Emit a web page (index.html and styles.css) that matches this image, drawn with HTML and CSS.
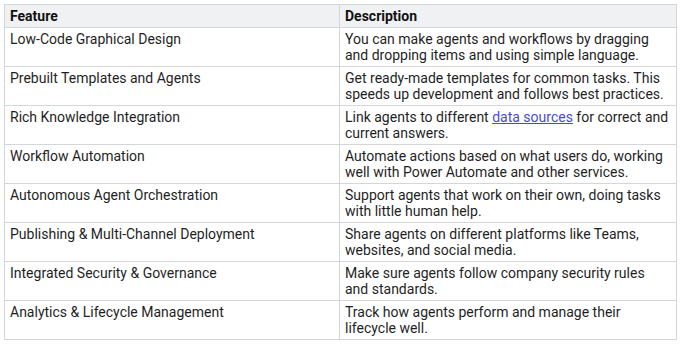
FILE: index.html
```html
<!DOCTYPE html>
<html>
<head>
<meta charset="utf-8">
<link rel="stylesheet" href="styles.css">
</head>
<body>
<table class="features">
  <thead>
    <tr><th class="col-feature">Feature</th><th class="col-desc">Description</th></tr>
  </thead>
  <tbody>
    <tr><td>Low-Code Graphical Design</td><td>You can make agents and workflows by dragging and dropping items and using simple language.</td></tr>
    <tr><td>Prebuilt Templates and Agents</td><td>Get ready-made templates for common tasks. This speeds up development and follows best practices.</td></tr>
    <tr><td>Rich Knowledge Integration</td><td>Link agents to different <a class="link" href="#">data sources</a> for correct and current answers.</td></tr>
    <tr><td>Workflow Automation</td><td>Automate actions based on what users do, working well with Power Automate and other services.</td></tr>
    <tr><td>Autonomous Agent Orchestration</td><td>Support agents that work on their own, doing tasks with little human help.</td></tr>
    <tr><td>Publishing &amp; Multi-Channel Deployment</td><td>Share agents on different platforms like Teams, websites, and social media.</td></tr>
    <tr><td>Integrated Security &amp; Governance</td><td>Make sure agents follow company security rules and standards.</td></tr>
    <tr><td>Analytics &amp; Lifecycle Management</td><td>Track how agents perform and manage their lifecycle well.</td></tr>
  </tbody>
</table>
</body>
</html>
```
FILE: styles.css
```css
html, body {
  margin: 0;
  padding: 0;
  background: #ffffff;
}
body {
  padding: 4px;
  font-family: Roboto, "Liberation Sans", sans-serif;
  font-size: 14px;
  line-height: 16px;
  color: #1f1f1f;
}
.features {
  border-collapse: collapse;
  width: 673px;
  table-layout: fixed;
}
.features th,
.features td {
  border: 1px solid #d3d6db;
  padding: 3px 5px;
  text-align: left;
  vertical-align: top;
}
.features td {
  height: 32px;
}
.features th {
  background: #f0f1f3;
  font-weight: 700;
  color: #111111;
}
.col-feature { width: 324px; }
.col-desc { width: auto; }
.link {
  color: #4a4ad6;
  text-decoration: underline;
}
```
